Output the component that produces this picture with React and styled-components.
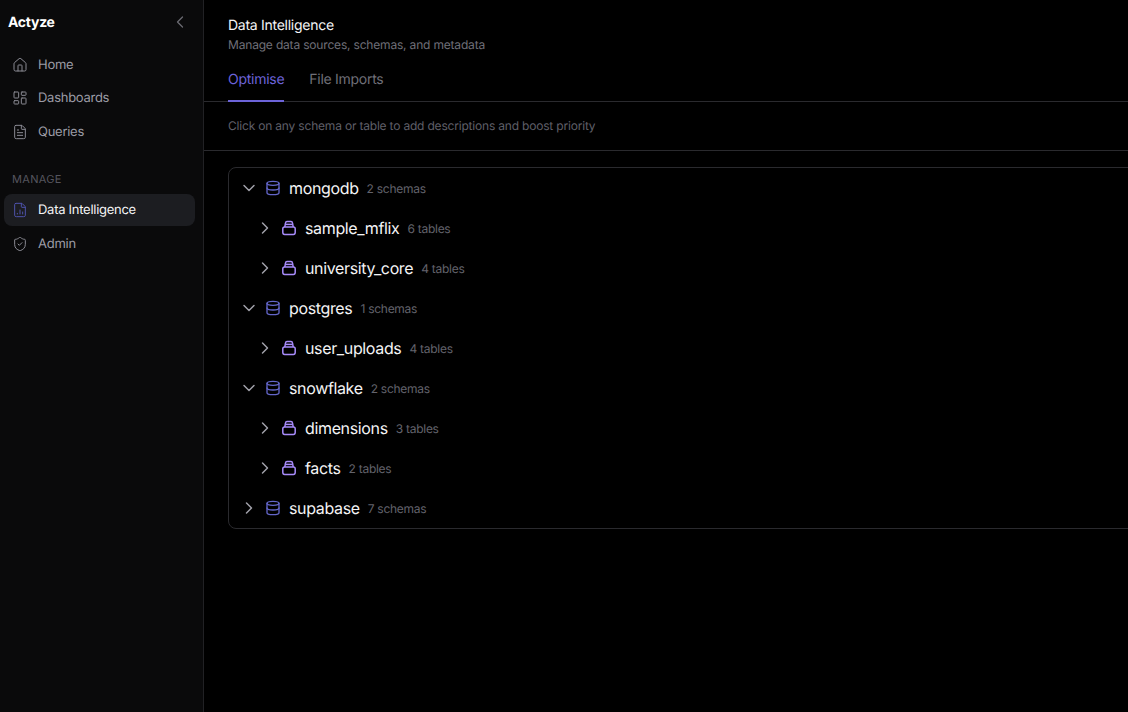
import React from 'react';
import styled, { createGlobalStyle } from 'styled-components';
import { ChevronDown, ChevronLeft, ChevronRight, Database, FileChartColumn, FileText, House, LayoutDashboard, ShieldCheck } from 'lucide-react';

const GlobalStyle = createGlobalStyle`
  html, body {
    margin: 0;
    padding: 0;
    height: 100%;
    background: #000;
  }
  body {
    font-family: Inter, "Liberation Sans", sans-serif;
    letter-spacing: -0.017em;
    text-rendering: geometricPrecision;
    overflow: hidden;
  }
  * {
    box-sizing: border-box;
  }
`;

const Shell = styled.div`
  display: flex;
  width: 1128px;
  height: 712px;
  overflow: hidden;
`;

const Sidebar = styled.aside`
  flex: 0 0 204px;
  background: #0a0a0b;
  border-right: 1px solid #212124;
`;

const Brand = styled.div`
  display: flex;
  align-items: center;
  justify-content: space-between;
  height: 44px;
  padding: 0 13px 0 8px;
  color: #fff;
  font-size: 14px;
  font-weight: 700;
  svg {
    color: #6b6b73;
  }
`;

const NavList = styled.nav`
  display: flex;
  flex-direction: column;
  gap: 1.5px;
  padding: ${(p) => (p.$first ? '4.5px' : '4px')} 8px 0 4px;
`;

const NavItem = styled.div`
  display: flex;
  align-items: center;
  gap: 10px;
  height: 32px;
  padding: 0 8px;
  border-radius: 8px;
  font-size: 13px;
  color: ${(p) => (p.$active ? '#f4f4f5' : '#9c9ca6')};
  background: ${(p) => (p.$active ? '#1c1d21' : 'transparent')};
  svg {
    flex: none;
    color: ${(p) => (p.$active ? '#4f53ad' : '#8b8b94')};
  }
`;

const NavLabel = styled.div`
  margin: 24.5px 0 0 12px;
  height: 18px;
  line-height: 14px;
  font-size: 11px;
  letter-spacing: 0.3px;
  color: #55555e;
`;

const Main = styled.main`
  flex: 1;
  min-width: 0;
  overflow: hidden;
`;

const Header = styled.header`
  padding: 17px 24px 0;
  border-bottom: 1px solid #2a2a2e;
`;

const Title = styled.h1`
  margin: 0;
  font-size: 14px;
  line-height: 18px;
  font-weight: 400;
  letter-spacing: inherit;
  color: #f4f4f5;
`;

const Subtitle = styled.p`
  margin: 2px 0 0;
  font-size: 12px;
  line-height: 16px;
  letter-spacing: -0.015em;
  color: #6f6f78;
`;

const Tabs = styled.div`
  display: flex;
  gap: 25px;
  margin-top: 17px;
`;

const Tab = styled.div`
  height: 32px;
  padding-top: 1px;
  font-size: 14px;
  line-height: 18px;
  color: ${(p) => (p.$active ? '#6c63d9' : '#6f6f78')};
  border-bottom: 2px solid ${(p) => (p.$active ? '#6c63d9' : 'transparent')};
  margin-bottom: -1px;
`;

const Hint = styled.div`
  height: 49px;
  padding: 0 24px 2px;
  display: flex;
  align-items: center;
  font-size: 12px;
  letter-spacing: -0.016em;
  color: #5f5f68;
  border-bottom: 1px solid #2a2a2e;
`;

const Content = styled.div`
  padding: 16px 24px;
`;

const Tree = styled.div`
  margin-right: -40px;
  border: 1px solid #2a2a2e;
  border-radius: 8px;
`;

const Row = styled.div`
  display: flex;
  align-items: center;
  height: 40px;
  padding-left: ${(p) => (p.$child ? 26 : 10)}px;
  svg {
    flex: none;
  }
`;

const Toggle = styled.span`
  display: flex;
  width: 20px;
  margin-right: 6px;
  color: #a1a1aa;
`;

const NodeIcon = styled.span`
  display: flex;
  width: 16px;
  margin-right: 8px;
  color: ${(p) => (p.$child ? '#a78bfa' : '#6366c9')};
`;

const NodeName = styled.span`
  font-size: 16px;
  letter-spacing: -0.022em;
  color: #f4f4f5;
`;

const NodeCount = styled.span`
  margin-left: 8px;
  font-size: 12px;
  color: #63636c;
`;

function SchemaIcon() {
  return (
    <svg width="16" height="16" viewBox="0 0 16 16" fill="none" stroke="currentColor" strokeWidth="1.5" strokeLinejoin="round">
      <path d="M3.8 7 4.4 3.4C4.6 2.2 5.2 1.6 6 1.6h4c.8 0 1.4.6 1.6 1.8L12.2 7" />
      <path d="M4.2 4.4h7.6" />
      <rect x="1.8" y="7" width="12.4" height="7.4" rx="1.8" />
    </svg>
  );
}

const NAV_TOP = [
  { label: 'Home', Icon: House },
  { label: 'Dashboards', Icon: LayoutDashboard },
  { label: 'Queries', Icon: FileText },
];

const NAV_MANAGE = [
  { label: 'Data Intelligence', Icon: FileChartColumn, active: true },
  { label: 'Admin', Icon: ShieldCheck },
];

const NODES = [
  { name: 'mongodb', count: '2 schemas', open: true },
  { name: 'sample_mflix', count: '6 tables', child: true },
  { name: 'university_core', count: '4 tables', child: true },
  { name: 'postgres', count: '1 schemas', open: true },
  { name: 'user_uploads', count: '4 tables', child: true },
  { name: 'snowflake', count: '2 schemas', open: true },
  { name: 'dimensions', count: '3 tables', child: true },
  { name: 'facts', count: '2 tables', child: true },
  { name: 'supabase', count: '7 schemas' },
];

function App() {
  return (
    <Shell>
      <GlobalStyle />
      <Sidebar>
        <Brand>
          Actyze
          <ChevronLeft size={20} strokeWidth={1.5} />
        </Brand>
        <NavList $first>
          {NAV_TOP.map(({ label, Icon }) => (
            <NavItem key={label}>
              <Icon size={16} strokeWidth={1.5} />
              {label}
            </NavItem>
          ))}
        </NavList>
        <NavLabel>MANAGE</NavLabel>
        <NavList>
          {NAV_MANAGE.map(({ label, Icon, active }) => (
            <NavItem key={label} $active={active}>
              <Icon size={16} strokeWidth={1.5} />
              {label}
            </NavItem>
          ))}
        </NavList>
      </Sidebar>
      <Main>
        <Header>
          <Title>Data Intelligence</Title>
          <Subtitle>Manage data sources, schemas, and metadata</Subtitle>
          <Tabs>
            <Tab $active>Optimise</Tab>
            <Tab>File Imports</Tab>
          </Tabs>
        </Header>
        <Hint>Click on any schema or table to add descriptions and boost priority</Hint>
        <Content>
          <Tree>
            {NODES.map((node) => (
              <Row key={node.name} $child={node.child}>
                <Toggle>
                  {node.open ? <ChevronDown size={20} strokeWidth={1.75} /> : <ChevronRight size={20} strokeWidth={1.75} />}
                </Toggle>
                <NodeIcon $child={node.child}>
                  {node.child ? <SchemaIcon /> : <Database size={16} strokeWidth={2} />}
                </NodeIcon>
                <NodeName>{node.name}</NodeName>
                <NodeCount>{node.count}</NodeCount>
              </Row>
            ))}
          </Tree>
        </Content>
      </Main>
    </Shell>
  );
}

export default App;
